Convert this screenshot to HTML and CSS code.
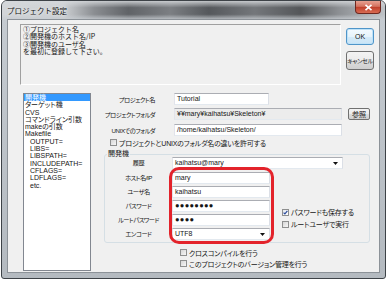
FILE: index.html
```html
<!DOCTYPE html>
<html lang="ja">
<head>
    <meta charset="UTF-8">
    <title>プロジェクト設定</title>
    <link rel="stylesheet" href="styles.css">
</head>
<body>
    <div class="window">
        <div class="titlebar">
            <span class="title">プロジェクト設定</span>
            <span class="close">
                <svg width="9" height="7" viewBox="0 0 9 7"><path d="M1.5 0.8L7.5 6.2M7.5 0.8L1.5 6.2" stroke="#fff" stroke-width="1.6" fill="none"/></svg>
            </span>
        </div>

        <div class="client">
            <div class="top">
                <div class="message">①プロジェクト名<br>②開発機のホスト名/IP<br>③開発機のユーザ名<br>を最初に登録して下さい。</div>
                <div class="buttons">
                    <button class="btn btn-ok">OK</button>
                    <button class="btn btn-cancel">キャンセル</button>
                </div>
            </div>

            <div class="main">
                <ul class="listbox">
                    <li class="selected">開発機</li>
                    <li>ターゲット機</li>
                    <li>CVS</li>
                    <li>コマンドライン引数</li>
                    <li>makeの引数</li>
                    <li>Makefile</li>
                    <li class="sub">OUTPUT=</li>
                    <li class="sub">LIBS=</li>
                    <li class="sub">LIBSPATH=</li>
                    <li class="sub">INCLUDEPATH=</li>
                    <li class="sub">CFLAGS=</li>
                    <li class="sub">LDFLAGS=</li>
                    <li class="sub">etc.</li>
                </ul>

                <div class="form">
                    <div class="row">
                        <span class="label">プロジェクト名</span>
                        <div class="field w-short">Tutorial</div>
                    </div>
                    <div class="row row-2">
                        <span class="label">プロジェクトフォルダ</span>
                        <div class="field w-long readonly">¥¥mary¥kaihatsu¥Skeleton¥</div>
                        <button class="btn btn-browse">参照</button>
                    </div>
                    <div class="row row-3">
                        <span class="label">UNIXでのフォルダ</span>
                        <div class="field w-long">/home/kaihatsu/Skeleton/</div>
                    </div>
                    <div class="check-row top-check">
                        <span class="check"></span>
                        <span>プロジェクトとUNIXのフォルダ名の違いを許可する</span>
                    </div>

                    <fieldset class="group">
                        <legend>開発機</legend>
                        <div class="group-grid">
                            <span class="glabel">履歴</span>
                            <div class="field combo wide">
                                <span>kaihatsu@mary</span>
                                <svg width="5" height="3" viewBox="0 0 5 3"><path d="M0 0H5L2.5 3Z" fill="#111"/></svg>
                            </div>

                            <span class="glabel">ホスト名/IP</span>
                            <div class="field">mary</div>

                            <span class="glabel">ユーザ名</span>
                            <div class="field">kaihatsu</div>

                            <span class="glabel">パスワード</span>
                            <div class="field dots">●●●●●●●●</div>

                            <span class="glabel">ルートパスワード</span>
                            <div class="field dots">●●●●</div>

                            <span class="glabel">エンコード</span>
                            <div class="field combo">
                                <span>UTF8</span>
                                <svg width="5" height="3" viewBox="0 0 5 3"><path d="M0 0H5L2.5 3Z" fill="#111"/></svg>
                            </div>

                            <div class="side-checks">
                                <div class="check-row">
                                    <span class="check checked">
                                        <svg width="5" height="5" viewBox="0 0 5 5"><path d="M0.6 2.6L1.9 3.9L4.4 0.8" stroke="#2b4b9b" stroke-width="1.2" fill="none"/></svg>
                                    </span>
                                    <span>パスワードも保存する</span>
                                </div>
                                <div class="check-row">
                                    <span class="check"></span>
                                    <span>ルートユーザで実行</span>
                                </div>
                            </div>
                        </div>
                    </fieldset>

                    <div class="bottom-checks">
                        <div class="check-row">
                            <span class="check"></span>
                            <span>クロスコンパイルを行う</span>
                        </div>
                        <div class="check-row">
                            <span class="check"></span>
                            <span>このプロジェクトのバージョン管理を行う</span>
                        </div>
                    </div>
                </div>
            </div>
        </div>

        <!-- 注目枠 -->
        <div class="annotation"></div>
    </div>
</body>
</html>
```

FILE: styles.css
```css
* {
    box-sizing: border-box;
}

body {
    margin: 0;
    background-color: #ffffff;
    font-family: "Liberation Sans", "Noto Sans CJK JP", sans-serif;
    font-size: 7px;
    color: #161616;
}

.window {
    position: relative;
    width: 385px;
    height: 279px;
    margin-left: 1px;
    border: 1px solid #3d4247;
    border-radius: 6px 6px 3px 3px;
    background: linear-gradient(to bottom, #c6ccd2, #b4bac0);
}

.titlebar {
    display: flex;
    align-items: flex-start;
    height: 19px;
    border-radius: 5px 5px 0 0;
    background:
        linear-gradient(to bottom, rgba(214, 217, 220, 0.85) 0%, rgba(214, 217, 220, 0) 35%, rgba(214, 217, 220, 0) 70%, rgba(200, 205, 210, 0.95) 100%),
        linear-gradient(to right, #d3d6d9 0%, #cdd0d3 16%, #8b8e92 24%, #606367 33%, #7c7f83 44%, #55585c 54%, #74777b 66%, #545659 78%, #8d9094 88%, #bfc3c7 100%);
}

.title {
    margin: 6px 0 0 5px;
    font-family: "Noto Sans CJK JP", sans-serif;
    font-size: 7.5px;
    line-height: 8px;
    color: #111;
    text-shadow: 0 0 3px rgba(255, 255, 255, 0.9);
}

.close {
    display: flex;
    align-items: center;
    justify-content: center;
    width: 26px;
    height: 13px;
    margin-left: auto;
    margin-right: 4px;
    border: 1px solid #6e2820;
    border-top: none;
    border-radius: 0 0 4px 4px;
    background: linear-gradient(to bottom, #e7a191 0%, #d3725f 45%, #c0402b 52%, #d86b53 100%);
}

.client {
    height: 252px;
    margin: 0 6px;
    background-color: #f0f0f0;
    box-shadow: 0 0 0 1px #8c9298;
}

.top {
    display: flex;
    padding: 4px 0 0 12px;
}

.message {
    width: 321px;
    height: 61px;
    padding: 1px 2px;
    border: 1px solid;
    border-color: #a0a0a0 #ffffff #ffffff #a0a0a0;
    font-family: "Noto Sans CJK JP", sans-serif;
    font-size: 7px;
    line-height: 7.3px;
}

.buttons {
    display: flex;
    flex-direction: column;
    margin-left: 5px;
    padding-top: 4px;
}

.btn {
    width: 28px;
    padding: 0;
    border: 1px solid #707070;
    border-radius: 3px;
    background: linear-gradient(to bottom, #f3f3f3 0%, #ebebeb 50%, #dddddd 51%, #cfcfcf 100%);
    font-family: "Liberation Sans", "Noto Sans CJK JP", sans-serif;
    font-size: 7px;
    color: #161616;
    font-feature-settings: "palt";
}

.btn-ok {
    height: 17px;
    border-color: #4f95c9;
    background: linear-gradient(to bottom, #f4fafe 0%, #e6f3fb 50%, #d4eaf8 51%, #c9e4f6 100%);
    box-shadow: inset 0 0 0 1px #bfe2f8;
}

.btn-cancel {
    height: 19px;
    margin-top: 6px;
    font-size: 6px;
    letter-spacing: -0.3px;
}

.main {
    display: flex;
    margin-top: 8px;
    padding-left: 15px;
}

.listbox {
    width: 68px;
    height: 178px;
    margin: 0;
    padding: 0;
    list-style: none;
    border: 1px solid #828790;
    background-color: #ffffff;
    font-size: 7px;
    line-height: 7.3px;
    font-feature-settings: "palt";
}

.listbox li {
    padding-left: 1px;
    white-space: nowrap;
}

.listbox li.sub {
    padding-left: 6px;
}

.listbox li.selected {
    background-color: #3399ff;
    color: #ffffff;
}

.form {
    width: 266px;
    margin-left: 13px;
    font-feature-settings: "palt";
}

.row {
    display: flex;
    align-items: center;
    height: 12px;
}

.row-2 {
    margin-top: 3px;
}

.row-3 {
    margin-top: 4px;
}

.label {
    display: flex;
    justify-content: flex-end;
    flex: none;
    width: 51px;
    margin-right: 19px;
    white-space: nowrap;
    font-size: 6.2px;
    letter-spacing: -0.45px;
}

.field {
    height: 12px;
    padding: 0 2px;
    border: 1px solid;
    border-color: #abadb3 #dbdfe6 #e3e9ef #e2e3ea;
    background-color: #ffffff;
    line-height: 10px;
    white-space: nowrap;
    overflow: hidden;
}

.w-short {
    width: 95px;
}

.w-long {
    width: 168px;
}

.field.readonly {
    background-color: #ececec;
}

.btn-browse {
    width: 22px;
    height: 12px;
    margin: -1px 0 0 6px;
    border-radius: 2px;
}

.check-row {
    display: flex;
    align-items: center;
    white-space: nowrap;
    letter-spacing: -0.2px;
}

.top-check {
    height: 9px;
    margin-top: 2px;
    padding-left: 6px;
}

.check {
    display: flex;
    align-items: center;
    justify-content: center;
    flex: none;
    width: 7px;
    height: 7px;
    margin-right: 2px;
    border: 1px solid #8e8f8f;
    background: linear-gradient(135deg, #d6d6d6, #f7f7f7);
}

.check.checked {
    background: linear-gradient(135deg, #e4e8ee, #ffffff);
}

.group {
    min-width: 0;
    margin: 3px 0 0;
    padding: 0 0 2px;
    border: 1px solid #d5dfe5;
    border-radius: 3px;
}

.group legend {
    margin-left: 2px;
    padding: 0 1px;
    line-height: 8px;
}

.group-grid {
    display: grid;
    grid-template-columns: 67px 98px 1fr;
    grid-template-rows: 13px repeat(5, 12px);
    row-gap: 2px;
    margin-top: -1px;
}

.glabel {
    grid-column: 1;
    align-self: start;
    line-height: 12px;
    text-align: center;
    white-space: nowrap;
    font-size: 6.2px;
    letter-spacing: -0.45px;
}

.group-grid > .field {
    grid-column: 2;
}

.combo {
    display: flex;
    align-items: center;
    justify-content: space-between;
    padding-right: 4px;
}

.group-grid > .combo.wide {
    grid-column: 2 / 4;
    width: 171px;
    height: 12px;
}

.dots {
    font-family: "Liberation Sans", sans-serif;
    font-size: 7.5px;
    letter-spacing: 0.3px;
}

.side-checks {
    grid-column: 3;
    grid-row: 4 / 7;
    align-self: start;
    margin-top: 6px;
    padding-left: 12px;
}

.side-checks .check-row {
    height: 12px;
}

.bottom-checks {
    margin-top: 4px;
    padding-left: 76px;
}

.bottom-checks .check-row {
    height: 11px;
}

.annotation {
    position: absolute;
    left: 167px;
    top: 166px;
    width: 105px;
    height: 77px;
    border: 3px solid #e3232b;
    border-radius: 10px;
}
```
